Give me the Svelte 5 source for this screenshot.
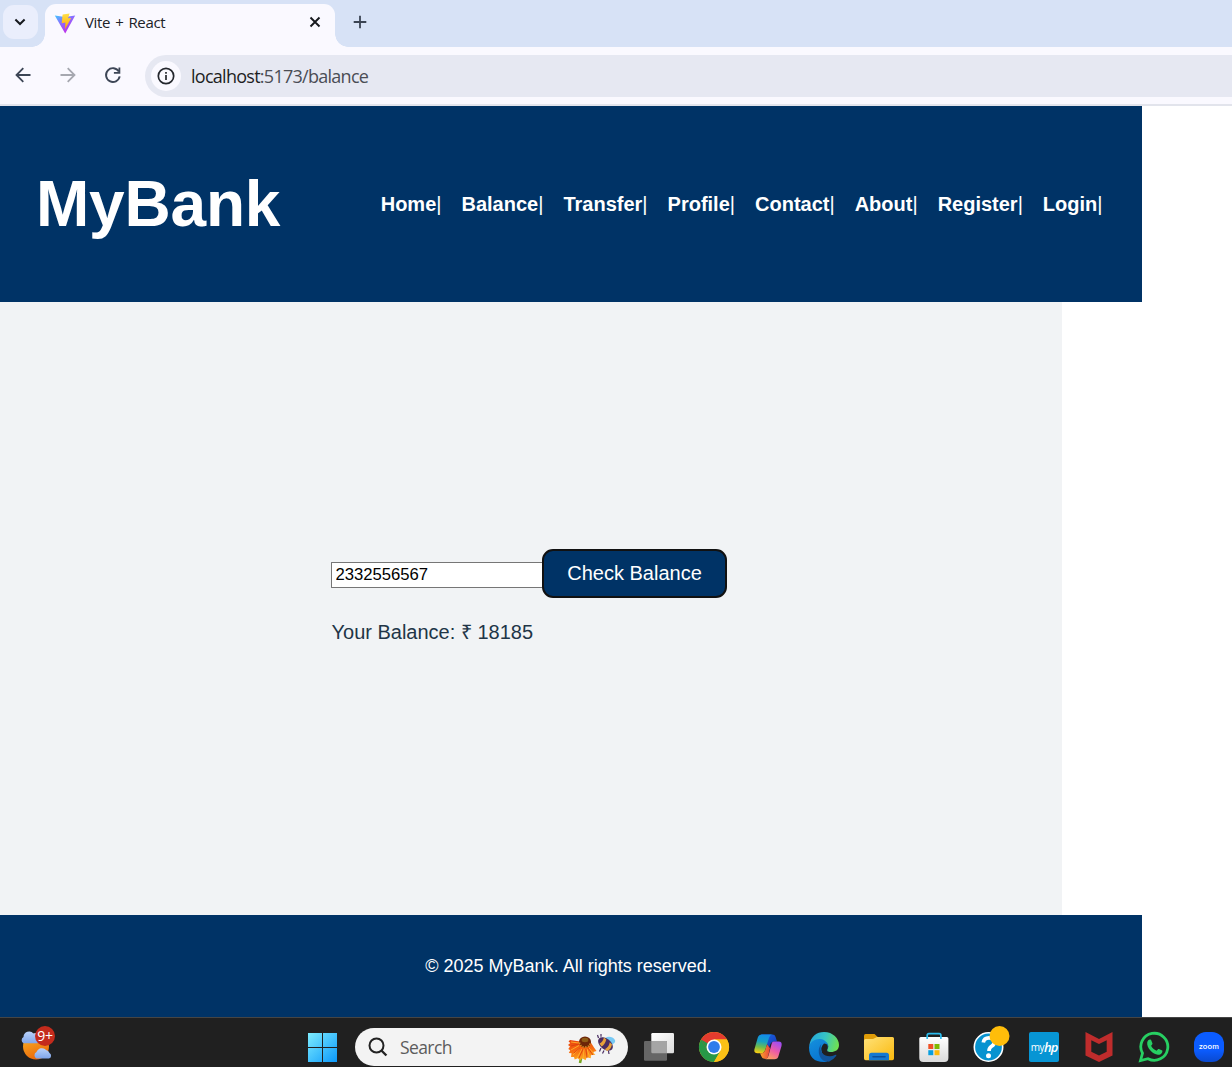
<script>
  const links = ['Home', 'Balance', 'Transfer', 'Profile', 'Contact', 'About', 'Register', 'Login'];
  let account = $state('2332556567');
</script>

<div class="screen">
  <div class="tabstrip">
    <button class="tabsearch" aria-label="Search tabs">
      <svg width="12" height="12" viewBox="0 0 12 12"><path d="M1.4 3.5 6 8l4.600-4.500" fill="none" stroke="#17191e" stroke-width="2" /></svg>
    </button>
    <div class="tab">
      <svg class="vite" width="22" height="22" viewBox="0 0 22 22">
        <defs>
          <linearGradient id="vp" x1="0" y1="0" x2=".6" y2="1"><stop offset="0" stop-color="#41c8ff" /><stop offset=".45" stop-color="#8b6cff" /><stop offset="1" stop-color="#c42be8" /></linearGradient>
          <linearGradient id="vy" x1="0" y1="0" x2="0" y2="1"><stop offset="0" stop-color="#ffe04a" /><stop offset="1" stop-color="#ffa800" /></linearGradient>
        </defs>
        <path d="M.8 3.500 11 5l10.200-1.500L11.200 21.400Z" fill="url(#vp)" />
        <path d="M8.600 2.600 15.600 1.400 14 6.300l3.200-.4-6.200 11.300.4-6.700-3.700.8Z" fill="url(#vy)" />
      </svg>
      <span class="title">Vite + React</span>
      <svg class="close" width="12" height="12" viewBox="0 0 12 12"><path d="m1.500 1.500 9 9m0-9-9 9" stroke="#17191e" stroke-width="1.900" /></svg>
    </div>
    <svg class="plus" width="14" height="14" viewBox="0 0 14 14"><path d="M7 .7v12.600M.7 7h12.600" stroke="#3b4453" stroke-width="1.800" /></svg>
  </div>

  <div class="toolbar">
    <svg width="18" height="18" viewBox="0 0 18 18"><path d="M16.500 9H2.500m6.800-6.800L2.500 9l6.800 6.800" fill="none" stroke="#3d4656" stroke-width="1.800" /></svg>
    <svg width="18" height="18" viewBox="0 0 18 18"><path d="M1.500 9h14M8.700 2.200 15.500 9l-6.800 6.800" fill="none" stroke="#a6a8b0" stroke-width="1.800" /></svg>
    <svg width="18" height="18" viewBox="0 0 18 18"><path d="M14.900 5.600A6.900 6.900 0 1 0 15.700 10.400" fill="none" stroke="#3d4656" stroke-width="1.900" /><path d="M16.300 1.600v6.200H9.900V6h4.600V1.600Z" fill="#3d4656" /></svg>
    <div class="omnibox">
      <span class="info">
        <svg width="18" height="18" viewBox="0 0 18 18"><circle cx="9" cy="9" r="7.700" fill="none" stroke="#24272d" stroke-width="1.700" /><path d="M9 8v5M9 5v1.800" stroke="#24272d" stroke-width="1.700" /></svg>
      </span>
      <span class="url"><b>localhost</b>:5173/balance</span>
    </div>
  </div>

  <div class="page">
    <header>
      <h1>MyBank</h1>
      <nav>
        {#each links as link}
          <span><a href="#{link}">{link}</a>|</span>
        {/each}
      </nav>
    </header>
    <main>
      <div class="form">
        <div class="row">
          <input aria-label="Account number" bind:value={account} />
          <button class="check">Check Balance</button>
        </div>
        <p>Your Balance: ₹ 18185</p>
      </div>
    </main>
    <footer>© 2025 MyBank. All rights reserved.</footer>
  </div>

  <div class="taskbar">
    <div class="weather">
      <svg width="36" height="36" viewBox="0 0 36 36">
        <defs>
          <linearGradient id="sun" x1="0" y1="0" x2=".4" y2="1"><stop offset="0" stop-color="#f8b928" /><stop offset="1" stop-color="#ed6b0b" /></linearGradient>
          <linearGradient id="cl" x1="0" y1="0" x2="0" y2="1"><stop offset="0" stop-color="#b9d2fb" /><stop offset="1" stop-color="#7fa5ea" /></linearGradient>
        </defs>
        <circle cx="17" cy="20.500" r="13" fill="url(#sun)" />
        <path d="M4.500 17.300a3.600 3.600 0 0 1 0-6.300 5.700 5.700 0 0 1 10-3.500 5 5 0 0 1 4 9.800Z" fill="url(#cl)" />
        <path d="M17.500 32.500a3.600 3.600 0 0 1 0-6.500 5.700 5.700 0 0 1 9.500-2 4.500 4.500 0 0 1 3.500 3 3 3 0 0 1-.5 5.500Z" fill="url(#cl)" />
      </svg>
      <span class="badge">9+</span>
    </div>
    <svg class="start" width="30" height="30" viewBox="0 0 30 30">
      <defs><linearGradient id="win" gradientUnits="userSpaceOnUse" x1="0" y1="0" x2="30" y2="30"><stop offset="0" stop-color="#7eedff" /><stop offset="1" stop-color="#0795fa" /></linearGradient></defs>
      <path d="M0 0h14v14H0ZM15 0h14v14H15ZM0 15h14v14H0ZM15 15h14v14H15Z" fill="url(#win)" />
    </svg>
    <div class="search">
      <svg width="20" height="20" viewBox="0 0 20 20"><circle cx="8.500" cy="8.500" r="7" fill="none" stroke="#222" stroke-width="2" /><path d="m13.400 13.500 5 5" stroke="#222" stroke-width="2.400" /></svg>
      <span>Search</span>
      <svg class="flower" width="50" height="30" viewBox="0 0 50 30">
        <defs><linearGradient id="petal" x1="0" y1="0" x2=".2" y2="1"><stop offset="0" stop-color="#e8420d" /><stop offset=".55" stop-color="#f66a10" /><stop offset="1" stop-color="#fda620" /></linearGradient></defs>
        <path d="M13.500 20q0 4-1.500 9" stroke="#73a51f" stroke-width="2.600" fill="none" />
        <path d="M12 7.500 2 6 .5 7.500 2.300 9 0 11l2 1.500L.3 15l2 1.200L.8 19l2.700.3-.5 3.700 3 .1.700 2.500 3-1.300 2.500 2.200 2-2.500 3.300 2.200 1.300-2.900 3.900.9.200-3 3.200-.4-.8-2.800 3.200-.9-2.500-3.500-3.800-6Z" fill="url(#petal)" />
        <path d="M11 9 3 8m8 3.500-8 4.500m9-2-7 7m9-6-5 9m7-9-1 10m4-10 3 9m-1-10 6 7" stroke="#ffb12b" stroke-width=".9" />
        <path d="m11 10-8 2m9 2-6 5m9-4-4 9m7-9 1 9m1-10 5 7" stroke="#d93b0d" stroke-width=".8" />
        <ellipse cx="17" cy="8" rx="6" ry="5.500" fill="#6c2508" />
        <path d="M11.500 8.500q1 4.500 5.500 4.500t5.500-4.500" fill="none" stroke="#dfa02a" stroke-width="1.400" stroke-dasharray="1.300 1.300" />
        <ellipse cx="17" cy="6" rx="3.400" ry="2.200" fill="#8d5b16" />
        <ellipse cx="42" cy="6.500" rx="5.300" ry="3.700" fill="#77c9f4" transform="rotate(15 42 6.500)" />
        <ellipse cx="37.500" cy="10" rx="8.500" ry="5.300" fill="#4a2d62" transform="rotate(38 37.500 10)" />
        <path d="M31.500 9.500q3-1 4.500-6l2.300 2q-1.500 5.500-4.800 7Zm5.300 5.800q4-2 5-7l2.200 2.200q-1.200 5-4.700 6.500Z" fill="#e8a139" />
        <path d="m30.500 4-1-3m3.500 1.700V0M33 14l-1.500 3.500m4.500-1L34.500 19.500m6-2.500 .5 3" stroke="#4a2d62" stroke-width="1.200" />
      </svg>
    </div>

    <div class="apps">
      <svg width="32" height="32" viewBox="0 0 32 32">
        <defs><linearGradient id="tv" x1="0" y1="0" x2="1" y2="1"><stop offset="0" stop-color="#fff" /><stop offset="1" stop-color="#dcdcdc" /></linearGradient></defs>
        <rect x="8.300" y="2" width="22.700" height="20.300" rx="1.200" fill="url(#tv)" />
        <rect x="1" y="10" width="23" height="19.800" rx="1.200" fill="#666" /><path d="M8.300 10H23a1 1 0 0 1 1 1v11.300H9.500a1.200 1.200 0 0 1-1.200-1.200Z" fill="#a5a5a5" />
      </svg>

      <svg width="32" height="32" viewBox="0 0 32 32">
        <circle cx="16" cy="16" r="15" fill="#fbc116" />
        <path d="M16 16 3 8.500A15 15 0 0 0 16 31l6.500-11.300Z" fill="#279847" />
        <path d="M3 8.500A15 15 0 0 1 29 8.500H16L9.500 19.700Z" fill="#e33b2e" />
        <path d="M3 8.500 9.500 19.700 16 16Z" fill="#279847" />
        <path d="M29 8.500A15 15 0 0 1 16 31l6.500-11.300L16 8.500Z" fill="#fbc116" />
        <circle cx="16" cy="16" r="7.500" fill="#fff" /><circle cx="16" cy="16" r="5.900" fill="#2f7deb" />
      </svg>

      <svg width="32" height="32" viewBox="0 0 32 32">
        <defs>
          <linearGradient id="c1" x1=".55" y1="0" x2=".4" y2="1"><stop offset="0" stop-color="#128bea" /><stop offset=".38" stop-color="#17a2c4" /><stop offset=".68" stop-color="#6fbd4d" /><stop offset="1" stop-color="#f8cd12" /></linearGradient>
          <linearGradient id="c2" x1=".7" y1="0" x2=".2" y2="1"><stop offset="0" stop-color="#a14df2" /><stop offset=".48" stop-color="#ed5aa8" /><stop offset="1" stop-color="#ffa25c" /></linearGradient>
          <linearGradient id="c3" x1="0" y1="0" x2="1" y2="1"><stop offset="0" stop-color="#1a68e8" /><stop offset="1" stop-color="#1537b8" /></linearGradient>
          <linearGradient id="c4" x1="0" y1="0" x2="1" y2="0"><stop offset="0" stop-color="#fba629" /><stop offset="1" stop-color="#e9433f" /></linearGradient>
        </defs>
        <path d="M8 3.500h11.500q2.300 0 3 2.300L24 10.600h-2.500q-3.500 0-4.500 3.500L16 17l-3-6Z" fill="url(#c3)" />
        <path d="M9 3.500h10q-2 .4-2.900 3L12.200 19q-1 3.300-4 3.300H4.500q-4 0-3-4.200L4.800 6.600q1-3.100 4.200-3.100Z" fill="url(#c1)" />
        <path d="M7 22.300h1.500q2.700 0 3.700-3l1.800-6 3 4-1.500 6.500Q14.700 28 12.700 28q-3.400 0-4.200-2.500Z" fill="url(#c4)" />
        <path d="M20.800 10.600h4.700q4 0 3 4.400l-3 10q-.8 3.200-4 3.200h-9q2-.2 2.800-3l3-11.200q.7-3.400 2.500-3.400Z" fill="url(#c2)" />
      </svg>

      <svg width="32" height="32" viewBox="0 0 32 32">
        <defs>
          <linearGradient id="e1" x1="0" y1=".3" x2="1" y2=".5"><stop offset="0" stop-color="#24a7dd" /><stop offset=".5" stop-color="#36c3c5" /><stop offset="1" stop-color="#6fe051" /></linearGradient>
          <linearGradient id="e2" x1="0" y1="0" x2=".5" y2="1"><stop offset="0" stop-color="#1590dd" /><stop offset="1" stop-color="#0874cf" /></linearGradient>
        </defs>
        <path d="M1.200 15C2.700 5 8.800 1 16 1c9 0 15 6.500 15 13 0 5-4 7-8 7-3.300 0-4.400-1.400-3.500-3 2-3 0-6.500-4-7.500-5-1.300-10.500.5-14.300 4.500Z" fill="url(#e1)" />
        <path d="M1 16c1.500-7 10-10 15.500-6.500 3.300 2 4.200 5 3 7.500q-1.200 2.400 0 4L22 30Q19 31 16 31 1 31 1 16Z" fill="url(#e2)" />
        <path d="M16 12.500c3.500 0 4.500 3 3.200 5.500-1 2.400.8 4.300 4.300 4.300 3 0 5.200-1 5.800-.5Q26 29.500 19 31l-5-9q-2-6 2-9.500Z" fill="#202020" />
        <path d="M13.300 13c-3 8 3 12.500 9 12.200 3.200-.2 5.200-2 6-1.400.8.7-3 5.300-7.300 6.600C11.500 32 8 19 13.300 13Z" fill="#11549b" />
      </svg>

      <svg width="32" height="32" viewBox="0 0 32 32">
        <defs><linearGradient id="fo" x1="0" y1="0" x2="1" y2="1"><stop offset="0" stop-color="#ffe279" /><stop offset="1" stop-color="#fbb90d" /></linearGradient></defs>
        <path d="M1 15V4.500Q1 3 2.500 3h9l3.500 3.200-3 4.300Z" fill="#df9c08" />
        <path d="M1 9.500Q1 8 2.500 8H10l4-2h15.500Q31 6 31 7.500v20q0 1.700-1.700 1.700H2.700Q1 29.200 1 27.500Z" fill="url(#fo)" />
        <path d="M6 29.300v-5q0-2.500 2.500-2.500h15q2.500 0 2.500 2.500v5Z" fill="#1779d2" />
        <path d="M10 25.700h12" stroke="#0d509b" stroke-width="1.600" stroke-linecap="round" />
      </svg>

      <svg width="32" height="32" viewBox="0 0 32 32">
        <defs><linearGradient id="st" x1="0" y1="0" x2="0" y2="1"><stop offset="0" stop-color="#fff" /><stop offset="1" stop-color="#dadada" /></linearGradient></defs>
        <path d="M1.300 7.500Q1.300 6 2.800 6h26.100q1.500 0 1.500 1.500V27q0 4-4 4H5.300q-4 0-4-4Z" fill="url(#st)" />
        <path d="M9.200 8V4.400q0-1.700 1.700-1.700h10.300q1.700 0 1.700 1.700V8" fill="none" stroke="#2cbced" stroke-width="1.700" />
        <path d="M10.300 13h5v5h-5Z" fill="#ef5126" /><path d="M16.500 13h5v5h-5Z" fill="#7eb900" /><path d="M10.300 19.200h5v5h-5Z" fill="#079edf" /><path d="M16.500 19.200h5v5h-5Z" fill="#fdb90a" />
      </svg>

      <svg class="help" width="32" height="32" viewBox="0 0 32 32">
        <circle cx="15.500" cy="16" r="14.200" fill="#0793d0" stroke="#fff" stroke-width="1.600" />
        <path d="M10.300 11.500q.7-4.700 5.700-4.700 5.300 0 5.300 4.200 0 2.600-2.700 4.300-2.600 1.700-2.600 4.700" fill="none" stroke="#fff" stroke-width="3.700" /><circle cx="15.500" cy="24.700" r="2.500" fill="#fff" />
        <circle cx="26.500" cy="5" r="10" fill="#ffbd0a" />
      </svg>

      <div class="hp"><span class="my">my</span><span class="brand">hp</span></div>

      <svg width="32" height="32" viewBox="0 0 32 32">
        <path d="m2.500 1 13.500 7L29.500 1v23.500L16 31 2.500 24.500Zm5.800 8.200v11.500L16 24.600l7.700-3.900V9.200L16 13Z" fill="#bf2c2c" />
      </svg>

      <svg width="32" height="32" viewBox="0 0 32 32">
        <path d="m2.500 29.500 2-7.200A13.500 13.500 0 1 1 10 27.700Z" fill="none" stroke="#27cf62" stroke-width="2.800" />
        <path d="M9.200 11.500c.4-2 1.700-3 2.800-2.900.8 0 1 .4 1.300 1l1.100 2.600c.3.8-.2 1.300-1.300 2.500 1.300 2.400 2.900 3.900 5.500 5 1.300-1.500 1.600-2 2.300-1.700l2.800 1.300c.8.400.8.700.6 1.600-.6 2.300-2.700 3-4.400 2.900C15 23.300 8.500 17 9.200 11.500Z" fill="#27cf62" />
      </svg>

      <div class="zoom">zoom</div>
    </div>
  </div>
</div>

<style>
  :global(body) { margin: 0; background: #fff; overflow: hidden; }
  * { box-sizing: border-box; }
  svg { display: block; flex: none; }
  .screen { width: 1232px; height: 1067px; display: flex; flex-direction: column; font-family: 'Liberation Sans', Arial, sans-serif; overflow: hidden; }

  .tabstrip { height: 47px; flex: none; background: #d7e2f6; display: flex; align-items: flex-start; padding: 5px 0 0 3px; }
  .tabsearch { width: 35px; height: 34px; padding: 0; border: 0; border-radius: 11px; background: #eaeefc; display: grid; place-items: center; }
  .tabsearch svg { margin-right: 1px; }
  .tab { position: relative; margin: -1px 0 0 7px; width: 290px; height: 43px; background: #faf9ff; border-radius: 11px 11px 0 0; display: flex; align-items: center; padding: 0 14px 6px 9px; }
  .tab::before, .tab::after { content: ''; position: absolute; bottom: 0; width: 13px; height: 13px; }
  .tab::before { left: -13px; background: radial-gradient(circle at 0 0, transparent 12.500px, #faf9ff 13px); }
  .tab::after { right: -13px; background: radial-gradient(circle at 100% 0, transparent 12.500px, #faf9ff 13px); }
  .title { flex: 1; margin: -2px 0 0 9px; font: 15px/20px 'Open Sans', sans-serif; letter-spacing: -.35px; word-spacing: 1.500px; color: #202227; }
  .close { margin-bottom: 1px; }
  .plus { margin: 10px 0 0 18px; }

  .toolbar { height: 59px; flex: none; background: #faf9ff; border-bottom: 2px solid #e2e4ec; display: flex; align-items: center; padding: 0 0 1px 14px; gap: 27px; }
  .omnibox { flex: 1; height: 42px; margin: 1px 0 0 -4px; border-radius: 21px 0 0 21px; background: #e6e8f2; display: flex; align-items: center; padding-left: 6px; }
  .info { width: 30px; height: 30px; border-radius: 50%; background: #faf9ff; display: grid; place-items: center; }
  .url { margin: 1px 0 0 10px; font: 18px/24px 'Open Sans', sans-serif; letter-spacing: -.73px; color: #4b4d55; }
  .url b { font-weight: 400; color: #1d1e22; }

  .page { flex: 1; display: flex; flex-direction: column; width: 1142px; }
  header { height: 196px; flex: none; background: #036; color: #fff; display: flex; justify-content: space-between; align-items: center; padding: 0 39.500px 0 36px; }
  h1 { margin: 0; font-size: 64px; line-height: 70px; letter-spacing: -.2px; }
  nav { display: flex; gap: 20px; font-size: 20px; line-height: 30px; }
  nav a { color: #fff; font-weight: 700; text-decoration: none; }
  main { width: 1062px; flex: 1; background: #f1f3f5; display: flex; justify-content: center; align-items: flex-start; padding-top: 247px; }
  .form { width: 400px; }
  .row { display: flex; align-items: center; }
  input { width: 211px; height: 26px; margin-top: 3px; padding: 0 4px 1px 3.500px; border: 1px solid #767676; border-right: 0; background: #fff; color: #000; font: 16.670px 'Liberation Sans', Arial, sans-serif; outline: 0; border-radius: 1px 0 0 1px; }
  .check { width: 185px; height: 49px; padding: 0; border: 2px solid #111; border-radius: 11px; background: #036; color: #fff; font: 20px 'Liberation Sans', Arial, sans-serif; }
  p { margin: 19px 0 0; padding-left: .5px; font-size: 20px; line-height: 30px; color: #213547; }
  footer { height: 102px; flex: none; background: #036; color: #fff; text-align: center; font-size: 18px; line-height: 102px; padding-right: 5px; }

  .taskbar { height: 50px; flex: none; background: #202020; border-top: 1px solid #454545; display: flex; align-items: flex-start; }
  .weather { position: relative; margin: 8px 0 0 19px; width: 36px; }
  .badge { position: absolute; left: 16px; top: 0; width: 20px; height: 20px; border-radius: 50%; background: #c42b1c; color: #fff; font: 14px/19px 'Open Sans', sans-serif; letter-spacing: -.3px; text-align: center; }
  .start { margin: 15px 0 0 253px; }
  .search { margin: 10px 0 0 17px; width: 273px; height: 38px; border-radius: 19px; background: #f3f3f3; display: flex; align-items: center; padding: 0 10px 0 13px; }
  .search span { flex: 1; margin-left: 12px; font: 17.500px/24px 'Open Sans', sans-serif; letter-spacing: -.6px; color: #5c5c5c; }
  .flower { margin-bottom: -4px; }
  .apps { display: flex; gap: 23px; margin: 13px 0 0 15px; }
  .help { overflow: visible; }
  .hp { flex: none; width: 30px; height: 30px; margin: 1px; border-radius: 2px; background: #0795d4; color: #fff; display: flex; justify-content: center; align-items: center; font-family: 'Open Sans', sans-serif; line-height: 16px; }
  .my { font-size: 10px; letter-spacing: -.5px; }
  .brand { font-size: 13px; font-style: italic; font-weight: 600; letter-spacing: -1px; }
  .zoom { flex: none; width: 30px; height: 30px; margin: 1px; border-radius: 12px; background: linear-gradient(#0b5cff 60%, #0a49cf); color: #fff; font: 600 8px/28px Lato, sans-serif; letter-spacing: .2px; text-align: center; }
</style>
